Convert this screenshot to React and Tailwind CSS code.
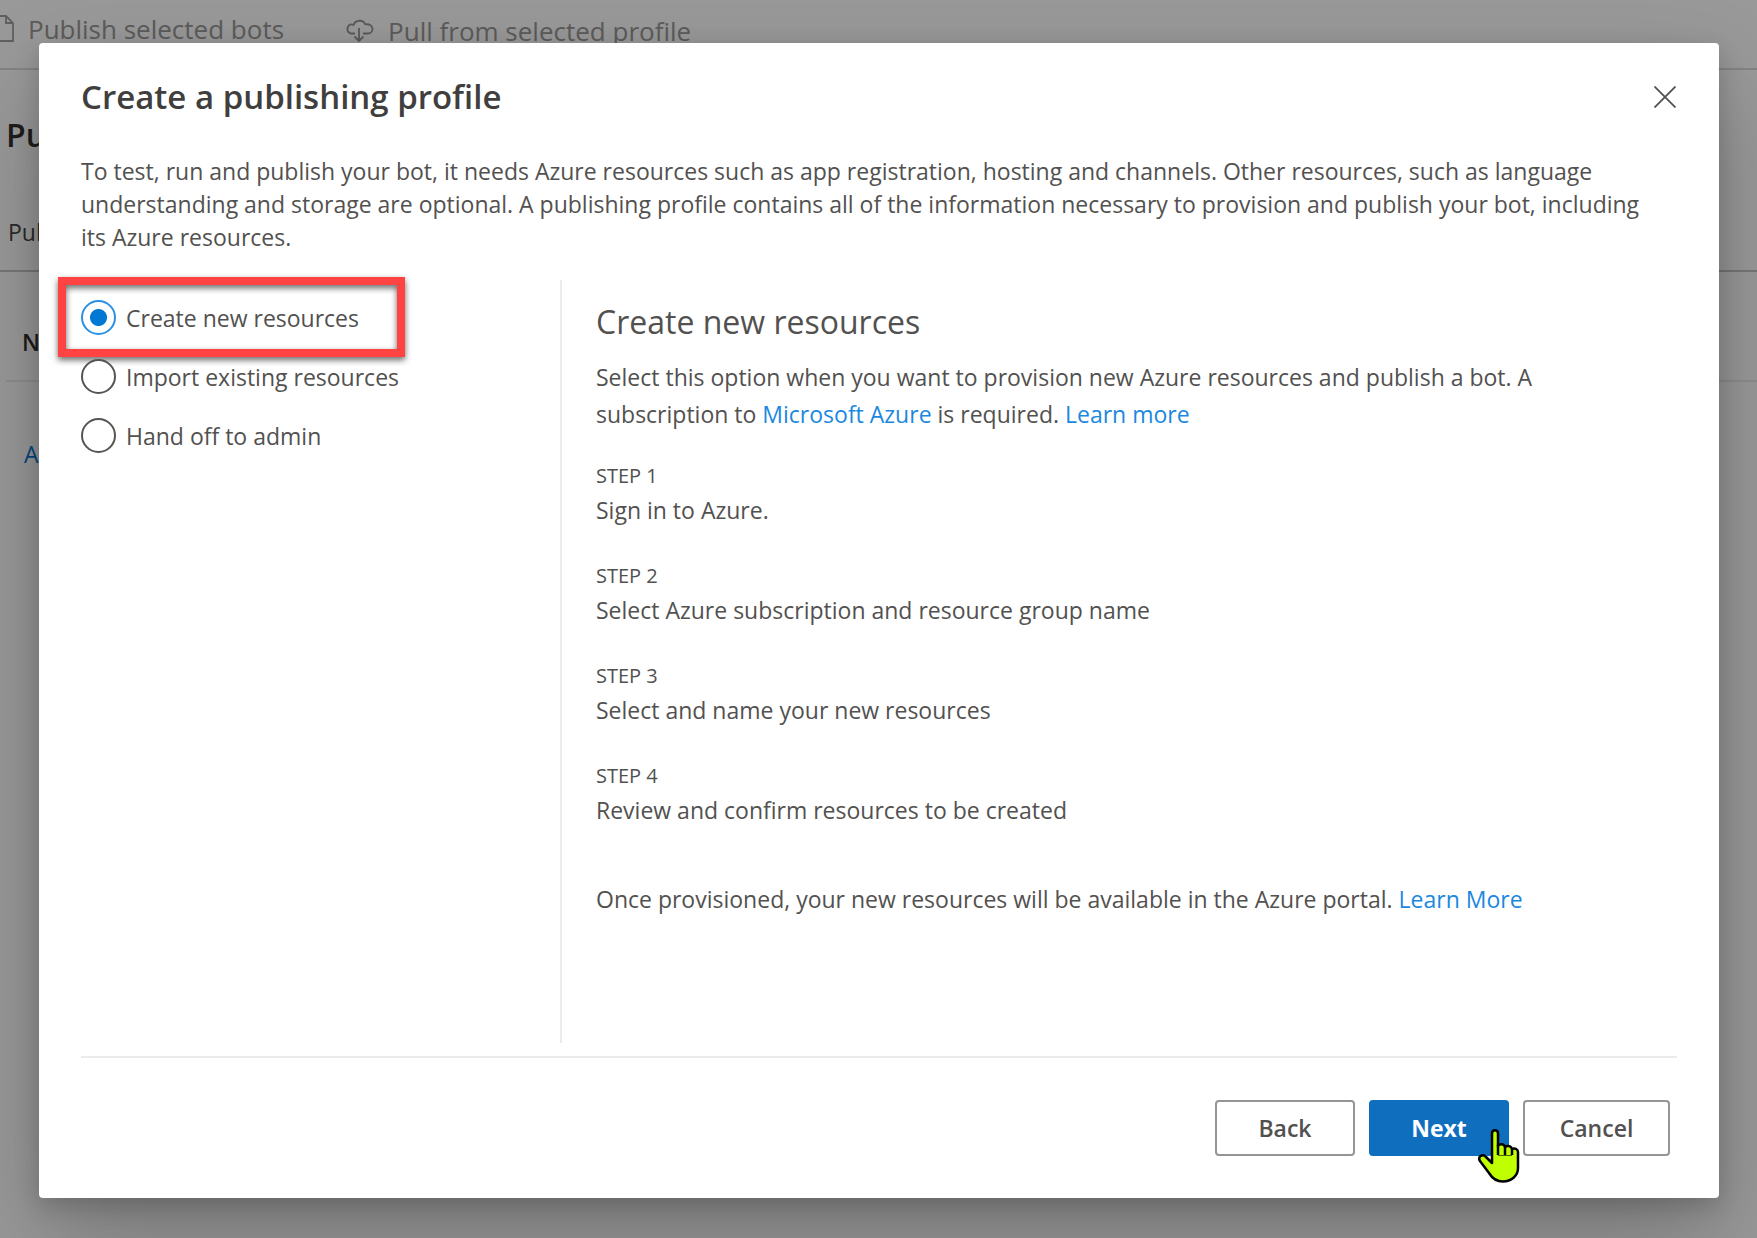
import React, { useState } from "react";

const options = ["Create new resources", "Import existing resources", "Hand off to admin"];

const steps = [
  "Sign in to Azure.",
  "Select Azure subscription and resource group name",
  "Select and name your new resources",
  "Review and confirm resources to be created",
];

function FileIcon() {
  return (
    <svg width="20" height="28" viewBox="0 0 20 28" fill="none" stroke="#a19f9d" strokeWidth="1.800" className="shrink-0">
      <path d="M1 1H12L19 8V26H1ZM12 1V8H19" />
    </svg>
  );
}

function CloudDownIcon() {
  return (
    <svg width="30" height="24" viewBox="0 0 30 24" fill="none" stroke="#989694" strokeWidth="1.800" className="shrink-0">
      <path d="M11 14.500H6.500A4.800 4.800 0 0 1 6.500 5.500C7.500 5.300 8.500 5.500 9.500 6A6.500 6.500 0 0 1 21.500 5.500C25.500 4.500 28.500 7 28.500 10C28.500 12.500 26.500 14.500 24 14.500H19M15 9V22M10.500 17.500L15 22L19.500 17.500" />
    </svg>
  );
}

function HandCursor() {
  return (
    <svg width="44" height="56" viewBox="0 0 44 56" className="pointer-events-none absolute -right-3 top-7 z-10">
      <path
        d="M15 35V5.500C15 1 21 1 21 5.500V18C22 15.500 27 15.500 28 19C30 17 34.500 18 35 21C38 19.500 41 21.500 41 24V40C41 48 34 53.500 26 53.500C19 53.500 15 50 12 45L3 33C0 28 6 25.500 9 29Z"
        fill="#bfff00"
        stroke="#000"
        strokeWidth="2.500"
        strokeLinejoin="round"
      />
      <path d="M21 17V27M28 19V27M35 21V27" fill="none" stroke="#000" strokeWidth="2.500" />
      <path d="M21 27.500H35" stroke="#4d6600" strokeWidth="1" />
    </svg>
  );
}

function PageBehind() {
  return (
    <div aria-hidden="true" className="absolute inset-0 overflow-hidden bg-white">
      <div className="flex h-[70px] items-start border-b-2 border-[#dddddd] pt-[11px] text-[26px] leading-9 text-[#9b9997]">
        <div className="-ml-1.5 flex items-center gap-3.5">
          <FileIcon />
          <span>Publish selected bots</span>
        </div>
        <div className="ml-[60px] flex items-center gap-3.5 pt-0.5">
          <CloudDownIcon />
          <span>Pull from selected profile</span>
        </div>
      </div>
      <div className="flex h-[202px] flex-col justify-between border-b-2 border-[#c8c6c4] px-2 pb-5 pt-[43px]">
        <h1 className="-ml-0.5 text-[32px] font-semibold leading-[44px] text-[#323130]">Publish your bots</h1>
        <span className="text-[23px] leading-9 text-[#484644]">Publish</span>
      </div>
      <div className="ml-1.5 h-[110px] border-b-2 border-[#edebe9] px-4 pt-[52px] text-[23px] font-semibold leading-[36px] text-[#323130]">
        Name
      </div>
      <div className="px-6 pt-[54px] text-[23px] leading-9 text-[#0078d4]">Add new</div>
    </div>
  );
}

export default function App() {
  const [choice, setChoice] = useState(0);
  return (
    <div className="relative min-h-screen font-['Open_Sans','Noto_Sans',sans-serif]">
      <PageBehind />
      <div className="relative flex min-h-screen bg-black/40 pb-10 pl-[39px] pr-[38px] pt-[43px]">
        <section
          role="dialog"
          aria-labelledby="dialog-title"
          className="flex flex-1 flex-col rounded-[4px] bg-white px-[42px] pb-[42px] text-[23px] text-[#525150] shadow-[0_44px_98px_rgba(0,0,0,0.22),0_8px_24px_rgba(0,0,0,0.18)]"
        >
          <header className="flex items-center justify-between pt-8">
            <h2 id="dialog-title" className="text-[33px] font-semibold leading-[44px] text-[#403f3e]">
              Create a publishing profile
            </h2>
            <button aria-label="Close" className="-mr-2.5 flex size-[44px] items-center justify-center">
              <svg width="22" height="22" viewBox="0 0 22 22" stroke="#525150" strokeWidth="1.800">
                <path d="M.5.5L21.500 21.500M21.500.5L.5 21.500" />
              </svg>
            </button>
          </header>
          <p className="mt-9 pr-5 leading-[33px]">
            To test, run and publish your bot, it needs Azure resources such as app registration, hosting and channels.
            Other resources, such as language understanding and storage are optional. A publishing profile contains all
            of the information necessary to provision and publish your bot, including its Azure resources.
          </p>
          <div className="mt-[26px] flex flex-1">
            <fieldset className="w-[481px] shrink-0 border-r-2 border-[#edebe9]">
              {options.map((label, i) => (
                <div key={label} className="relative flex h-[59px] items-center first-of-type:mt-2">
                  {i === 0 && (
                    <div className="pointer-events-none absolute -left-[23px] -top-[11px] h-20 w-[347px] border-8 border-[#ff4343] drop-shadow-[0_3px_3px_rgba(0,0,0,0.6)]" />
                  )}
                  <label className="flex cursor-pointer items-center gap-2.5">
                    <input
                      type="radio"
                      name="source"
                      checked={choice === i}
                      onChange={() => setChoice(i)}
                      className="size-[35px] shrink-0 appearance-none rounded-full border-2 border-[#555453] bg-white checked:border-[#2b90e3] checked:bg-[radial-gradient(circle,#0078d4_8px,transparent_9px)]"
                    />
                    <span className="leading-9">{label}</span>
                  </label>
                </div>
              ))}
            </fieldset>
            <div className="flex-1 pl-[34px] pr-[100px] pt-[18px]">
              <h3 className="text-[32px] leading-[48px]">Create new resources</h3>
              <p className="mt-[13px] leading-[37px]">
                Select this option when you want to provision new Azure resources and publish a bot. A subscription to{" "}
                <a href="#azure" className="text-[#1b88e0]">Microsoft Azure</a> is required.{" "}
                <a href="#learn" className="text-[#1b88e0]">Learn more</a>
              </p>
              <ol className="mt-[26px]">
                {steps.map((text, i) => (
                  <li key={text} className="mb-[31px]">
                    <div className="text-[20px] leading-[34px]">STEP {i + 1}</div>
                    <div className="leading-[35px]">{text}</div>
                  </li>
                ))}
              </ol>
              <p className="pt-[22px] leading-[37px]">
                Once provisioned, your new resources will be available in the Azure portal.{" "}
                <a href="#portal" className="text-[#1b88e0]">Learn More</a>
              </p>
            </div>
          </div>
          <footer className="mt-[13px] flex justify-end gap-3.5 border-t-2 border-[#edebe9] pr-[7px] pt-[42px] font-semibold">
            <button className="h-14 w-[140px] rounded-[4px] border-2 border-[#979593]">Back</button>
            <div className="relative">
              <button className="h-14 w-[140px] rounded-[4px] bg-[#106ebe] font-bold text-white">Next</button>
              <HandCursor />
            </div>
            <button className="h-14 w-[147px] rounded-[4px] border-2 border-[#979593]">Cancel</button>
          </footer>
        </section>
      </div>
    </div>
  );
}
